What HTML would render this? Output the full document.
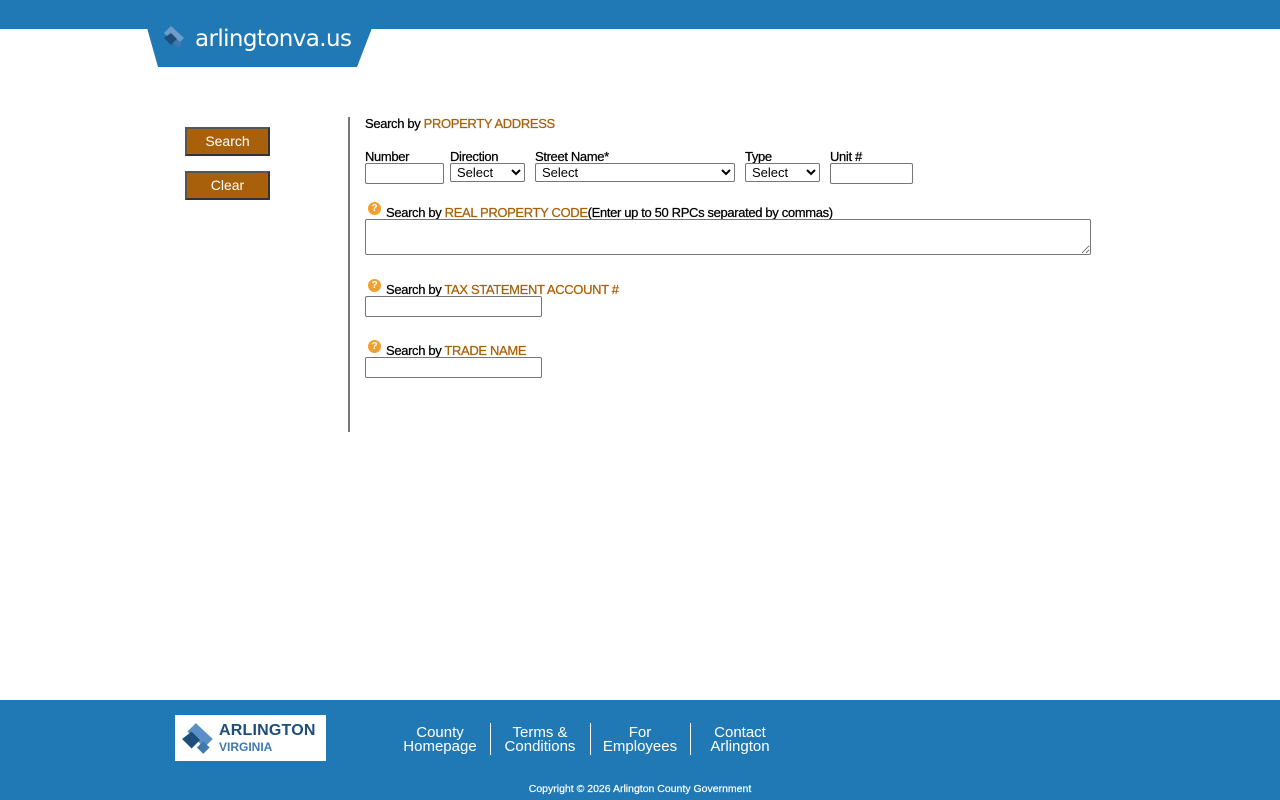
<!DOCTYPE html>
<html><head><meta charset="utf-8"><style>
*{box-sizing:border-box}
body{margin:0;width:1280px;height:800px;position:relative;background:#fff;font-family:"Liberation Sans",Arial,sans-serif;font-size:13px;color:#000;overflow:hidden}
.top{position:absolute;left:0;top:0;width:1280px;height:29px;background:#2079b5}
.tab{position:absolute;left:143px;top:0;width:231px;height:67px;background:#2079b5;clip-path:polygon(0 28px,4px 28px,15px 100%,214px 100%,229px 28px,100% 0,0 0)}
.logo{position:absolute;left:195px;top:26px;color:#fff;font-family:"DejaVu Sans",sans-serif;font-size:23px;letter-spacing:-0.6px}
.btn{position:absolute;left:185px;width:85px;height:29px;background:#a8600a;border:2px solid #333;border-top-color:#555;border-left-color:#555;color:#fff;font-size:14px;text-align:center;line-height:25px}
.vline{position:absolute;left:348px;top:117px;width:2px;height:315px;background:#777}
.t{position:absolute;white-space:nowrap;letter-spacing:-0.35px;-webkit-text-stroke:0.25px currentColor}
.o{color:#a8600a}
input,select,textarea{position:absolute;border:1px solid #767676;border-radius:2px;background:#fff;font-family:"Liberation Sans",Arial,sans-serif;font-size:13px;margin:0;padding:0 2px}
select{height:19px;color:#000}
.q{position:absolute;width:13px;height:13px;border-radius:50%;background:#f0a030;color:#fff;font-size:10px;font-weight:bold;text-align:center;line-height:13px}
.foot{position:absolute;left:0;top:700px;width:1280px;height:100px;background:#2079b5}
.fl{position:absolute;top:726px;height:32px;color:#fff;text-align:center;font-size:15px;line-height:14px;font-family:"Liberation Sans",sans-serif}
.sep{position:absolute;top:723px;width:1px;height:32px;background:#fff}
</style></head><body>
<div class="top"></div>
<div class="tab"></div>
<svg style="position:absolute;left:162px;top:25px" width="26" height="26" viewBox="0 0 26 26"><path d="M9 1 L22 13 L15 20 L2 8Z" fill="#6e9ccc"/><path d="M2 13 L9 8 L15 14 L9 20Z" fill="#1d4e7a"/><path d="M11 18 L15 14 L20 19 L16 23Z" fill="#3f79b0"/></svg>
<div class="logo">arlingtonva.us</div>

<div class="btn" style="top:127px">Search</div>
<div class="btn" style="top:171px">Clear</div>
<div class="vline"></div>

<div class="t" style="left:365px;top:116px">Search by <span class="o">PROPERTY ADDRESS</span></div>
<div class="t" style="left:365px;top:149px">Number</div>
<div class="t" style="left:450px;top:149px">Direction</div>
<div class="t" style="left:535px;top:149px">Street Name*</div>
<div class="t" style="left:745px;top:149px">Type</div>
<div class="t" style="left:830px;top:149px">Unit #</div>
<input style="left:365px;top:163px;width:79px;height:21px">
<select style="left:450px;top:163px;width:75px"><option>Select</option></select>
<select style="left:535px;top:163px;width:200px"><option>Select</option></select>
<select style="left:745px;top:163px;width:75px"><option>Select</option></select>
<input style="left:830px;top:163px;width:83px;height:21px">

<div class="q" style="left:368px;top:202px">?</div>
<div class="t" style="left:386px;top:205px">Search by <span class="o">REAL PROPERTY CODE</span>(Enter up to 50 RPCs separated by commas)</div>
<textarea style="left:365px;top:219px;width:726px;height:36px"></textarea>

<div class="q" style="left:368px;top:279px">?</div>
<div class="t" style="left:386px;top:282px">Search by <span class="o">TAX STATEMENT ACCOUNT #</span></div>
<input style="left:365px;top:296px;width:177px;height:21px">

<div class="q" style="left:368px;top:340px">?</div>
<div class="t" style="left:386px;top:343px">Search by <span class="o">TRADE NAME</span></div>
<input style="left:365px;top:357px;width:177px;height:21px">

<div class="foot"></div>
<div style="position:absolute;left:175px;top:715px;width:151px;height:46px;background:#fff"></div>
<svg style="position:absolute;left:181px;top:722px" width="36" height="34" viewBox="0 0 34 32"><path d="M14 1 L30 16 L22 24 L6 9Z" fill="#5b8fc7"/><path d="M1 16 L10 9 L18 17 L10 25Z" fill="#1d4e7a"/><path d="M15 24 L21 18 L27 24 L21 30Z" fill="#3f79b0"/></svg>
<div class="t" style="left:219px;top:722px;font-size:16px;font-weight:bold;color:#1d4e7a;letter-spacing:0.2px;-webkit-text-stroke:0">ARLINGTON</div>
<div class="t" style="left:219px;top:740px;font-size:12px;font-weight:bold;color:#3f79b0;letter-spacing:0;-webkit-text-stroke:0">VIRGINIA</div>

<div class="fl" style="left:395px;width:90px">County<br>Homepage</div>
<div class="sep" style="left:490px"></div>
<div class="fl" style="left:495px;width:90px">Terms &amp;<br>Conditions</div>
<div class="sep" style="left:590px"></div>
<div class="fl" style="left:595px;width:90px">For<br>Employees</div>
<div class="sep" style="left:690px"></div>
<div class="fl" style="left:695px;width:90px">Contact<br>Arlington</div>
<div style="position:absolute;left:0;width:1280px;text-align:center;top:783px;color:#fff;font-size:10.5px;font-family:'Liberation Sans',sans-serif;-webkit-text-stroke:0.2px #fff">Copyright © 2026 Arlington County Government</div>
</body></html>
